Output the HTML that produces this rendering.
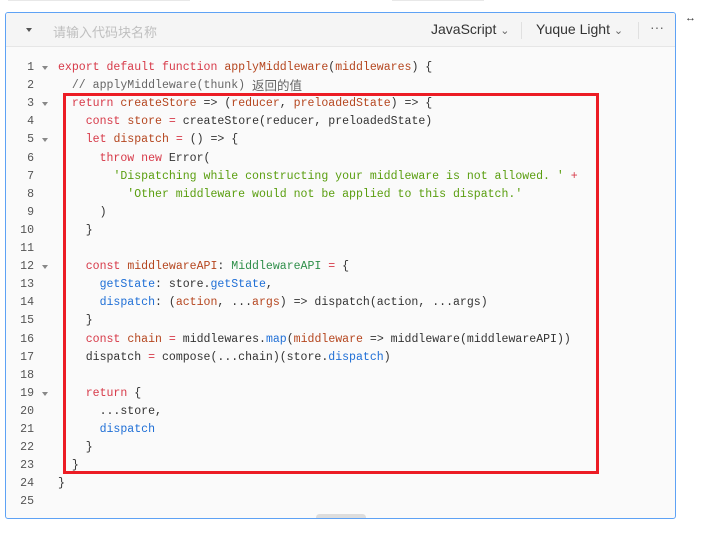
<!DOCTYPE html>
<html><head><meta charset="utf-8"><style>
body{margin:0;background:#fff;width:706px;height:546px;position:relative;overflow:hidden;font-family:"Liberation Sans","Noto Sans CJK SC",sans-serif}
.tb1{position:absolute;top:0;left:8px;width:182px;height:1px;background:#e8e8e8}
.tb2{position:absolute;top:0;left:392px;width:92px;height:1px;background:#e8e8e8}
.box{position:absolute;left:5px;top:12px;width:671px;height:507px;border:1px solid #5ea2f5;border-radius:3px;background:#fafafa;box-sizing:border-box;overflow:hidden}
.hd{position:absolute;left:0;top:0;right:0;height:33px;background:#f5f5f5;border-bottom:1px solid #e6e6e6}
.hd .ph{position:absolute;left:47px;top:9px;font-size:13px;color:#bfbfbf}
.hd .tri{position:absolute;left:20px;top:15px;width:0;height:0;border-left:3.5px solid transparent;border-right:3.5px solid transparent;border-top:4px solid #555}
.hd .t{position:absolute;top:8px;font-size:14px;color:#333}
.sep{position:absolute;top:9px;width:1px;height:17px;background:#e0e0e0}
.code{position:absolute;left:0;top:46px;font-family:"Liberation Mono",monospace;font-size:11.55px;line-height:18.1px;color:#333}
.ln{position:absolute;left:0;width:28px;text-align:right;color:#555;height:18px}
.fa{position:absolute;left:36px;width:0;height:0;border-left:3px solid transparent;border-right:3px solid transparent;border-top:4px solid #888;margin-top:7px}
.c{position:absolute;left:52px;white-space:pre;height:18px}
.k{color:#d73a49}.v{color:#b5461f}.s{color:#5a9e0f}.p{color:#1f6fd6}.t2{color:#2f8f4a}
.cj{font-family:'Noto Sans CJK SC',sans-serif;font-size:12.5px;line-height:1;display:inline-block;vertical-align:top;margin-top:2px}
.red{position:absolute;left:63px;top:93px;width:536px;height:381px;border:3px solid #ec1c24;box-sizing:border-box}
.hnd{position:absolute;left:310px;bottom:-3px;width:50px;height:7px;border-radius:4px;background:#ddd}
</style></head><body>
<div class="tb1"></div><div class="tb2"></div>
<div class="box">
<div class="hd"><div class="tri"></div><div class="ph">请输入代码块名称</div>
<div class="t" style="left:425px">JavaScript <span style="font-size:11px;color:#666">&#8964;</span></div>
<div class="sep" style="left:515px"></div>
<div class="t" style="left:530px">Yuque Light <span style="font-size:11px;color:#666">&#8964;</span></div>
<div class="sep" style="left:632px"></div>
<div class="t" style="left:644px;top:6px;color:#666">···</div>
</div>
<div class="code">
<div style="position:relative">
<div class="ln" style="top:0">1</div><div class="fa" style="top:0"></div><div class="c" style="top:0"><span class="k">export default function</span> <span class="v">applyMiddleware</span>(<span class="v">middlewares</span>) {</div>
<div class="ln" style="top:18.1px">2</div><div class="c" style="top:18.1px;color:#666">  // applyMiddleware(thunk) <span class="cj">返回的值</span></div>
<div class="ln" style="top:36.2px">3</div><div class="fa" style="top:36.2px"></div><div class="c" style="top:36.2px">  <span class="k">return</span> <span class="v">createStore</span> => (<span class="v">reducer</span>, <span class="v">preloadedState</span>) => {</div>
<div class="ln" style="top:54.3px">4</div><div class="c" style="top:54.3px">    <span class="k">const</span> <span class="v">store</span> <span class="k">=</span> createStore(reducer, preloadedState)</div>
<div class="ln" style="top:72.4px">5</div><div class="fa" style="top:72.4px"></div><div class="c" style="top:72.4px">    <span class="k">let</span> <span class="v">dispatch</span> <span class="k">=</span> () => {</div>
<div class="ln" style="top:90.5px">6</div><div class="c" style="top:90.5px">      <span class="k">throw new</span> Error(</div>
<div class="ln" style="top:108.6px">7</div><div class="c" style="top:108.6px">        <span class="s">'Dispatching while constructing your middleware is not allowed. '</span> <span class="k">+</span></div>
<div class="ln" style="top:126.7px">8</div><div class="c" style="top:126.7px">          <span class="s">'Other middleware would not be applied to this dispatch.'</span></div>
<div class="ln" style="top:144.8px">9</div><div class="c" style="top:144.8px">      )</div>
<div class="ln" style="top:162.9px">10</div><div class="c" style="top:162.9px">    }</div>
<div class="ln" style="top:181px">11</div>
<div class="ln" style="top:199.1px">12</div><div class="fa" style="top:199.1px"></div><div class="c" style="top:199.1px">    <span class="k">const</span> <span class="v">middlewareAPI</span>: <span class="t2">MiddlewareAPI</span> <span class="k">=</span> {</div>
<div class="ln" style="top:217.2px">13</div><div class="c" style="top:217.2px">      <span class="p">getState</span>: store.<span class="p">getState</span>,</div>
<div class="ln" style="top:235.3px">14</div><div class="c" style="top:235.3px">      <span class="p">dispatch</span>: (<span class="v">action</span>, ...<span class="v">args</span>) => dispatch(action, ...args)</div>
<div class="ln" style="top:253.4px">15</div><div class="c" style="top:253.4px">    }</div>
<div class="ln" style="top:271.5px">16</div><div class="c" style="top:271.5px">    <span class="k">const</span> <span class="v">chain</span> <span class="k">=</span> middlewares.<span class="p">map</span>(<span class="v">middleware</span> => middleware(middlewareAPI))</div>
<div class="ln" style="top:289.6px">17</div><div class="c" style="top:289.6px">    dispatch <span class="k">=</span> compose(...chain)(store.<span class="p">dispatch</span>)</div>
<div class="ln" style="top:307.7px">18</div>
<div class="ln" style="top:325.8px">19</div><div class="fa" style="top:325.8px"></div><div class="c" style="top:325.8px">    <span class="k">return</span> {</div>
<div class="ln" style="top:343.9px">20</div><div class="c" style="top:343.9px">      ...store,</div>
<div class="ln" style="top:362px">21</div><div class="c" style="top:362px">      <span class="p">dispatch</span></div>
<div class="ln" style="top:380.1px">22</div><div class="c" style="top:380.1px">    }</div>
<div class="ln" style="top:398.2px">23</div><div class="c" style="top:398.2px">  }</div>
<div class="ln" style="top:416.3px">24</div><div class="c" style="top:416.3px">}</div>
<div class="ln" style="top:434.4px">25</div>
</div></div>
<div class="hnd"></div>
</div>
<div class="red"></div>
<div style="position:absolute;left:685px;top:12px;font-size:11px;color:#333">&#8596;</div>
</body></html>
